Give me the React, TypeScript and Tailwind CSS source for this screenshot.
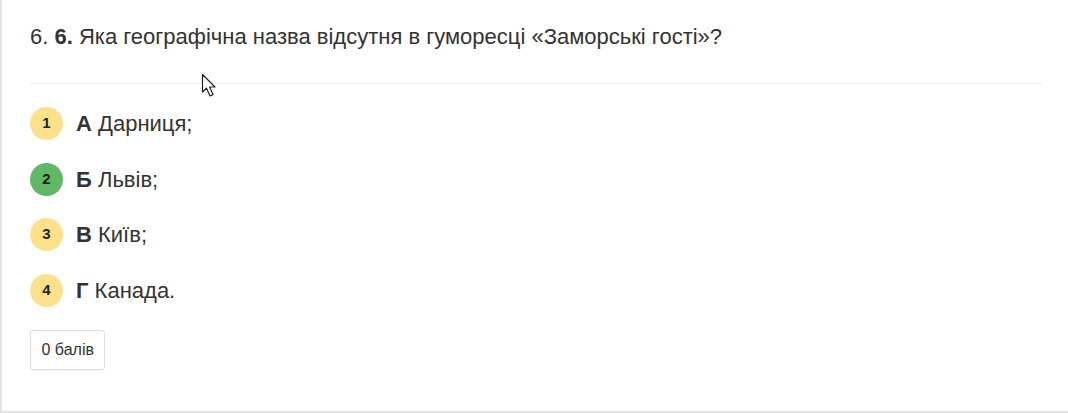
import React from 'react'

const options = [
  { n: 1, letter: 'А', text: 'Дарниця;', correct: false },
  { n: 2, letter: 'Б', text: 'Львів;', correct: true },
  { n: 3, letter: 'В', text: 'Київ;', correct: false },
  { n: 4, letter: 'Г', text: 'Канада.', correct: false },
]

function Cursor() {
  return (
    <svg className="absolute left-[199px] top-[73px]" width="18" height="26" viewBox="0 0 18 26">
      <path
        d="M1.5 1.5 L1.5 19 L5.5 15.2 L9 23 L12 21.6 L8.6 14 L14 14 Z"
        fill="#fff"
        stroke="#222"
        strokeWidth="1.2"
        strokeLinejoin="round"
      />
    </svg>
  )
}

export default function App() {
  return (
    <div
      className="relative h-[413px] w-[1068px] overflow-hidden bg-white border-l-2 border-b-2 border-[#e4e4e4] text-[#333]"
      style={{ fontFamily: '"Liberation Sans", Arial, sans-serif' }}
    >
      <div className="pl-[28px] pr-[26px] pt-[22px]">
        <h2 className="text-[22px] leading-[30px]">
          6. <b>6.</b> Яка географічна назва відсутня в гуморесці «Заморські гості»?
        </h2>
        <div className="mt-[31px] h-px bg-[#eeeeee]" />
        <ul className="mt-[23px] flex flex-col gap-[22.5px]">
          {options.map((o) => (
            <li key={o.n} className="flex items-center gap-[13px]">
              <span
                className={
                  'flex h-[33px] w-[33px] shrink-0 items-center justify-center rounded-full text-[15px] font-bold text-[#222] ' +
                  (o.correct ? 'bg-[#5fb865]' : 'bg-[#fde18a]')
                }
              >
                {o.n}
              </span>
              <span className="text-[22px] leading-[33px]">
                <b>{o.letter}</b> {o.text}
              </span>
            </li>
          ))}
        </ul>
        <button className="mt-[23px] h-[40px] rounded-[3px] border border-[#dddddd] px-[10.5px] text-[16px] text-[#333] shadow-[0_1px_1px_rgba(0,0,0,0.04)]">
          0 балів
        </button>
      </div>
      <Cursor />
    </div>
  )
}
